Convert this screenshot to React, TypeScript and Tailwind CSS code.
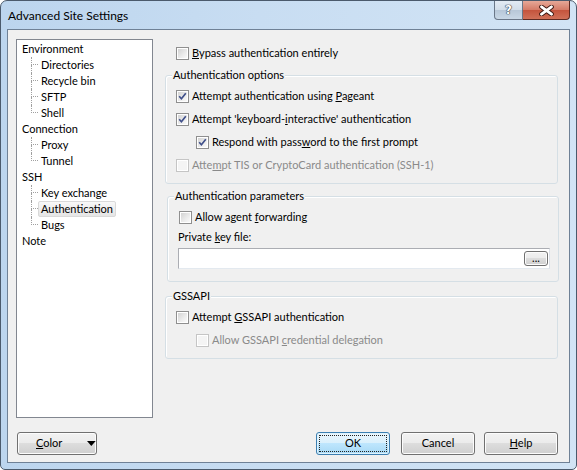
import type { ReactNode } from "react";

const tree = [
  { label: "Environment", children: ["Directories", "Recycle bin", "SFTP", "Shell"] },
  { label: "Connection", children: ["Proxy", "Tunnel"] },
  { label: "SSH", children: ["Key exchange", "Authentication", "Bugs"] },
  { label: "Note", children: [] as string[] },
];

function CheckBox({ checked, disabled }: { checked?: boolean; disabled?: boolean }) {
  return (
    <div
      className={`w-[13px] h-[13px] shrink-0 border p-[1px] bg-white ${
        disabled ? "border-[#c5c5c5]" : "border-[#8f8f8f]"
      }`}
    >
      <div
        className={`w-full h-full relative ${
          disabled
            ? "bg-[#f4f4f4]"
            : "bg-[linear-gradient(135deg,#d3d3d3_0%,#ececec_60%,#fafafa_100%)]"
        }`}
      >
        {checked && (
          <svg width="9" height="9" viewBox="0 0 9 9" className="block">
            <path d="M1.2 4.3 L3.4 6.7 L7.8 1.3" fill="none" stroke="#3f4f8a" strokeWidth="1.7" />
          </svg>
        )}
      </div>
    </div>
  );
}

function Check({
  children,
  checked,
  disabled,
  className = "",
}: {
  children: ReactNode;
  checked?: boolean;
  disabled?: boolean;
  className?: string;
}) {
  return (
    <div className={`flex items-center gap-[3px] h-[16px] ${className}`}>
      <CheckBox checked={checked} disabled={disabled} />
      <span className={disabled ? "text-[#8a8a8a]" : "text-black"}>{children}</span>
    </div>
  );
}

function Group({ title, className = "", children }: { title: string; className?: string; children: ReactNode }) {
  return (
    <div
      className={`relative border border-[#d5dfe5] rounded-[3px] shadow-[inset_1px_1px_0_#ffffff] ${className}`}
    >
      <span className="absolute left-[6px] top-[-9px] px-[1px] bg-[#f0f0f0] leading-[16px]">{title}</span>
      {children}
    </div>
  );
}

function Btn({ children, className = "", def }: { children: ReactNode; className?: string; def?: boolean }) {
  return (
    <div
      className={`h-[23px] rounded-[3px] border flex items-center justify-center relative ${
        def
          ? "border-[#3c7fb1] bg-[linear-gradient(to_bottom,#eaf6fd_0%,#d9f0fc_50%,#bee6fd_50%,#a7d9f5_100%)] shadow-[inset_0_0_0_1px_#dff2fc]"
          : "border-[#707070] bg-[linear-gradient(to_bottom,#f2f2f2_0%,#ebebeb_50%,#dddddd_50%,#cfcfcf_100%)] shadow-[inset_0_0_0_1px_#fcfcfc]"
      } ${className}`}
    >
      {def && <div className="absolute inset-[2px] border border-dotted border-[#222]" />}
      {children}
    </div>
  );
}

export default function App() {
  return (
    <div className="w-[577px] h-[470px] border border-[#4b5a6c] rounded-t-[7px] rounded-b-[5px] overflow-hidden bg-[linear-gradient(to_right,#bcd5ee_0%,#c8ddf2_45%,#d2e4f5_100%)] font-['Lato',sans-serif] text-[11px] text-black">
      <div className="h-[28px] relative flex items-center pl-[7px]">
        <span className="pt-[2px] text-[12px]">Advanced Site Settings</span>
        <div className="absolute top-0 right-[6px] flex">
          <div className="w-[29px] h-[19px] border border-[#6a7788] border-t-0 rounded-bl-[4px] bg-[linear-gradient(to_bottom,#e3ebf4_0%,#d2dde9_50%,#b7c7d8_50%,#c9d8e6_100%)] flex items-center justify-center font-['DejaVu_Sans',sans-serif] font-bold text-[12px] text-white [text-shadow:0_0_1px_#2a3340,0_0_1px_#2a3340,0_0_1px_#2a3340]">
            ?
          </div>
          <div className="w-[47px] h-[19px] border border-[#5d2a22] border-t-0 border-l-0 rounded-br-[4px] bg-[linear-gradient(to_bottom,#e6a898_0%,#d47a66_50%,#c4533c_50%,#d07058_100%)] flex items-center justify-center">
            <svg width="15" height="11" viewBox="0 0 15 11">
              <path d="M2.5 1.8 L12.5 9.2 M12.5 1.8 L2.5 9.2" stroke="#3b1610" strokeWidth="4.6" strokeLinecap="round" />
              <path d="M2.5 1.8 L12.5 9.2 M12.5 1.8 L2.5 9.2" stroke="#ffffff" strokeWidth="2.8" strokeLinecap="round" />
            </svg>
          </div>
        </div>
      </div>

      <div className="ml-[6px] w-[563px] h-[434px] border border-[#6f8196] bg-[#f0f0f0] flex flex-col">
        <div className="flex pt-[9px]">
          {/* tree */}
          <div className="ml-[8px] w-[137px] h-[379px] border border-[#828790] bg-white pt-[1px] pl-[5px]">
            {tree.map((n) => (
              <div key={n.label}>
                <div className="h-[16px] flex items-center">{n.label}</div>
                {n.children.map((c, i) => {
                  const last = i === n.children.length - 1;
                  const sel = c === "Authentication";
                  return (
                    <div key={c} className="h-[16px] flex pl-[9px]">
                      <div className="w-[7px] flex flex-col">
                        <div className="h-[8px] border-l border-b border-dotted border-[#a0a0a0]" />
                        <div className={`h-[8px] ${last ? "" : "border-l border-dotted border-[#a0a0a0]"}`} />
                      </div>
                      <div
                        className={`h-[16px] flex items-center px-[2px] border rounded-[2px] ${
                          sel
                            ? "border-[#d9d9d9] bg-[linear-gradient(to_bottom,#f8f8f8,#e5e5e5)]"
                            : "border-transparent"
                        }`}
                      >
                        {c}
                      </div>
                    </div>
                  );
                })}
              </div>
            ))}
          </div>

          {/* right panel */}
          <div className="ml-[12px] w-[394px] flex flex-col">
            <Check className="ml-[11px] mt-[6px]">
              <span className="underline">B</span>ypass authentication entirely
            </Check>

            <Group title="Authentication options" className="mt-[14px] w-[393px] pt-[12px] pb-[10px] pl-[10px] flex flex-col gap-[7px]">
              <Check checked>
                Attempt authentication using <span className="underline">P</span>ageant
              </Check>
              <Check checked>
                Attempt 'keyboard-<span className="underline">i</span>nteractive' authentication
              </Check>
              <Check checked className="ml-[20px]">
                Respond with pass<span className="underline">w</span>ord to the first prompt
              </Check>
              <Check disabled>
                Atte<span className="underline">m</span>pt TIS or CryptoCard authentication (SSH-1)
              </Check>
            </Group>

            <Group title="Authentication parameters" className="mt-[12px] ml-[2px] w-[392px] pt-[12px] pb-[12px] pl-[10px] flex flex-col">
              <Check className="ml-[1px]">
                Allow agent <span className="underline">f</span>orwarding
              </Check>
              <div className="h-[16px] mt-[4px] flex items-center">
                <span>
                  Private <span className="underline">k</span>ey file:
                </span>
              </div>
              <div className="mt-[3px] w-[372px] h-[21px] bg-white border border-[#abadb3] border-b-[#e3e9ef] border-r-[#dbdfe6] flex items-center justify-end pr-[1px]">
                <Btn className="w-[24px] !h-[15px] items-end pb-[1px] leading-[12px]">...</Btn>
              </div>
            </Group>

            <Group title="GSSAPI" className="mt-[14px] w-[393px] pt-[12px] pb-[10px] pl-[10px] flex flex-col gap-[7px]">
              <Check>
                Attempt <span className="underline">G</span>SSAPI authentication
              </Check>
              <Check disabled className="ml-[20px]">
                Allow GSSAPI <span className="underline">c</span>redential delegation
              </Check>
            </Group>
          </div>
        </div>

        {/* buttons */}
        <div className="flex mt-[14px] ml-[9px]">
          <Btn className="w-[80px] justify-start pl-[18px]">
            <span>
              <span className="underline">C</span>olor
            </span>
            <svg width="9" height="5" viewBox="0 0 9 5" className="ml-[25px]">
              <path d="M0 0 L9 0 L4.5 5 Z" fill="#000" />
            </svg>
          </Btn>
          <Btn def className="w-[74px] ml-[219px]">
            OK
          </Btn>
          <Btn className="w-[74px] ml-[11px]">Cancel</Btn>
          <Btn className="w-[74px] ml-[9px]">
            <span>
              <span className="underline">H</span>elp
            </span>
          </Btn>
        </div>
      </div>
    </div>
  );
}
